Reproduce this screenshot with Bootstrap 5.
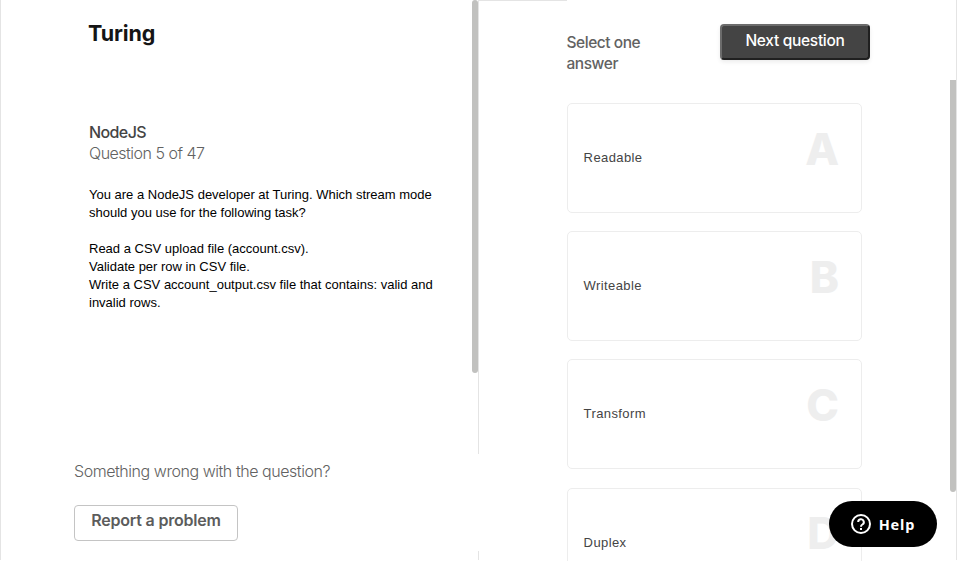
<!DOCTYPE html>
<html lang="en">
<head>
<meta charset="utf-8">
<meta name="viewport" content="width=device-width, initial-scale=1">
<title>Turing</title>
<link href="https://cdn.jsdelivr.net/npm/bootstrap@5.3.0/dist/css/bootstrap.min.css" rel="stylesheet">
<style>
body{font-family:Inter,"Liberation Sans",sans-serif;font-size:16px;line-height:21px;color:#626262;background:#fff}
.screen{height:561px}
.question-pane{width:479px;height:560px;border-left:1px solid #e4e4e4;border-right:1px solid #e4e4e4}
.question-body{height:454px;padding:18px 40px 0 88px}
.brand{font-size:21.5px;line-height:30px;font-weight:700;letter-spacing:-.1px;color:#151515;margin-bottom:74px;margin-left:-1px}
.topic{font-weight:500;letter-spacing:-.6px;color:#444}
.progress-text{font-weight:300;letter-spacing:-.5px;margin-bottom:22px}
.prompt{font:13px/18px "Liberation Sans",Arial,sans-serif;color:#000}
.report-area{width:479px;height:97px;padding:7px 0 0 73px}
.report-text{font-weight:300;letter-spacing:-.45px;margin-bottom:23px}
.btn-report{width:164px;height:36px;padding:4px 0 9px;font-weight:600;line-height:21px;color:#5c5c5c;border:1px solid #c4c4c4;border-radius:4px;letter-spacing:-.2px;background:#fff}
.answer-pane{width:478px;height:560px;border-right:1px solid #e4e4e4}
.top-rule{width:88px;height:1px;background:#e4e4e4}
.answer-head{height:102px;padding:23px 86px 0 88px}
.answer-title{width:100px;margin:8px 0 0 -.5px;font-size:15.5px;font-weight:500;letter-spacing:-.45px}
.btn-next{width:150px;height:36px;padding:0 0 3px;background:#444;color:#fff;font-size:15.5px;font-weight:500;line-height:21px;border:2px solid;border-color:#6c6c6c #202020 #202020 #6c6c6c;border-radius:4px;letter-spacing:-.3px;box-shadow:0 2px 4px #00000014}
.answers{height:458px;padding-left:88px}
.answer{flex:none;width:295px;height:110px;margin-bottom:18.2px;border:1px solid #ededed;border-radius:5px;padding:0 22px 0 15.6px}
.answer-text{font:13px/18px "Liberation Sans",Arial,sans-serif;letter-spacing:.4px;color:#444}
.answer-letter{font-size:44px;line-height:50px;font-weight:800;color:#eee;margin-top:-19px}
.thumb{width:6px;background:#c1c1bf}
.thumb-left{left:472px;top:0;height:373px;border-radius:3px}
.thumb-right{left:950px;top:80px;height:412px;border-radius:0 0 3px 3px}
.help{left:829px;top:501px;width:108px;height:46px;background:#000;color:#fff;font:700 14.5px/20px "Noto Sans",sans-serif;letter-spacing:.85px;border:0}
</style>
<script src="https://cdn.jsdelivr.net/npm/bootstrap@5.3.0/dist/js/bootstrap.bundle.min.js"></script>
</head>
<body class="overflow-hidden">
<main class="screen d-flex position-relative overflow-hidden">
  <section class="question-pane flex-shrink-0">
    <div class="question-body">
      <div class="brand">Turing</div>
      <div class="topic">NodeJS</div>
      <div class="progress-text">Question 5 of 47</div>
      <div class="prompt">You are a NodeJS developer at Turing. Which stream mode<br>should you use for the following task?<br><br>Read a CSV upload file (account.csv).<br>Validate per row in CSV file.<br>Write a CSV account_output.csv file that contains: valid and<br>invalid rows.</div>
    </div>
    <div class="report-area position-relative bg-white">
      <div class="report-text">Something wrong with the question?</div>
      <button class="btn btn-report">Report a problem</button>
    </div>
  </section>
  <section class="answer-pane flex-shrink-0">
    <div class="top-rule"></div>
    <div class="answer-head d-flex justify-content-between align-items-start">
      <div class="answer-title">Select one<br>answer</div>
      <button class="btn btn-next">Next question</button>
    </div>
    <div class="answers d-flex flex-column">
      <div class="answer d-flex align-items-center justify-content-between"><span class="answer-text">Readable</span><span class="answer-letter">A</span></div>
      <div class="answer d-flex align-items-center justify-content-between"><span class="answer-text">Writeable</span><span class="answer-letter">B</span></div>
      <div class="answer d-flex align-items-center justify-content-between"><span class="answer-text">Transform</span><span class="answer-letter">C</span></div>
      <div class="answer d-flex align-items-center justify-content-between"><span class="answer-text">Duplex</span><span class="answer-letter">D</span></div>
    </div>
  </section>
  <div class="thumb thumb-left position-absolute"></div>
  <div class="thumb thumb-right position-absolute"></div>
  <button class="help position-absolute rounded-pill d-flex align-items-center justify-content-center gap-2 p-0">
    <svg width="20" height="20" viewBox="0 0 20 20" fill="none" stroke="#fff" stroke-width="2"><circle cx="10" cy="10" r="9"/><path d="M7.2 8.1a2.8 2.8 0 1 1 4.2 2.4c-.9.5-1.4 1-1.4 2.2"/><path d="M10 14v2"/></svg>
    <span>Help</span>
  </button>
</main>
</body>
</html>
